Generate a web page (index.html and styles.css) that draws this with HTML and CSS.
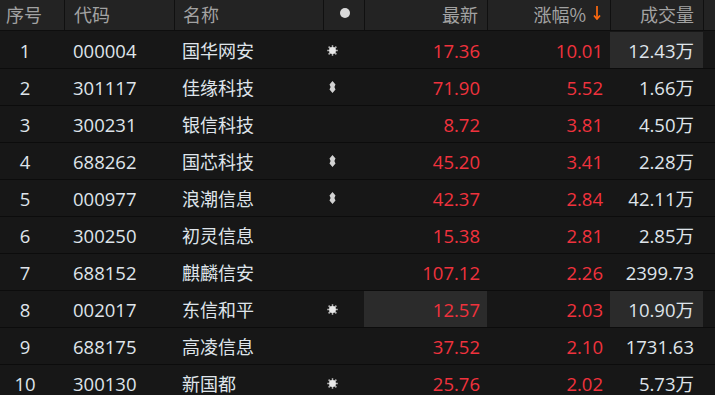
FILE: index.html
```html
<!DOCTYPE html>
<html lang="zh-CN">
<head>
<meta charset="utf-8">
<title>行情列表</title>
<link rel="stylesheet" href="styles.css">
</head>
<body>
<div class="table">
  <div class="row head">
    <div class="c idx-h">序号</div>
    <div class="c code sep">代码</div>
    <div class="c name sep">名称</div>
    <div class="c mark-h sep"><span class="dot"></span></div>
    <div class="c num sep">最新</div>
    <div class="c num sep">涨幅%<svg class="arrow" width="8" height="14" viewBox="0 0 8 14"><line x1="4" y1="0" x2="4" y2="13" /><polyline points="1,9.5 4,13 7,9.5" /></svg></div>
    <div class="c num vol sep">成交量</div>
    <div class="c sep"></div>
  </div>
  <div class="body">
    <div class="row">
      <div class="c idx">1</div><div class="c code">000004</div><div class="c name">国华网安</div>
      <div class="c mark"><svg class="star" width="11" height="11" viewBox="0 0 11 11"><g><line x1="5.5" y1="0.2" x2="5.5" y2="10.8"/><line x1="0.2" y1="5.5" x2="10.8" y2="5.5"/><line x1="1.6" y1="1.6" x2="9.4" y2="9.4"/><line x1="9.4" y1="1.6" x2="1.6" y2="9.4"/></g><circle cx="5.5" cy="5.5" r="3.4"/></svg></div>
      <div class="c num red">17.36</div><div class="c num red">10.01</div><div class="c num vol hl">12.43万</div><div class="c"></div>
    </div>
    <div class="row">
      <div class="c idx">2</div><div class="c code">301117</div><div class="c name">佳缘科技</div>
      <div class="c mark"><svg class="dia" width="7" height="12" viewBox="0 0 7 12"><path d="M3.5 0 L6.5 3.6 L5.4 6 L6.5 8.4 L3.5 12 L0.5 8.4 L1.6 6 L0.5 3.6 Z"/></svg></div>
      <div class="c num red">71.90</div><div class="c num red">5.52</div><div class="c num vol">1.66万</div><div class="c"></div>
    </div>
    <div class="row">
      <div class="c idx">3</div><div class="c code">300231</div><div class="c name">银信科技</div>
      <div class="c mark"></div>
      <div class="c num red">8.72</div><div class="c num red">3.81</div><div class="c num vol">4.50万</div><div class="c"></div>
    </div>
    <div class="row">
      <div class="c idx">4</div><div class="c code">688262</div><div class="c name">国芯科技</div>
      <div class="c mark"><svg class="dia" width="7" height="12" viewBox="0 0 7 12"><path d="M3.5 0 L6.5 3.6 L5.4 6 L6.5 8.4 L3.5 12 L0.5 8.4 L1.6 6 L0.5 3.6 Z"/></svg></div>
      <div class="c num red">45.20</div><div class="c num red">3.41</div><div class="c num vol">2.28万</div><div class="c"></div>
    </div>
    <div class="row">
      <div class="c idx">5</div><div class="c code">000977</div><div class="c name">浪潮信息</div>
      <div class="c mark"><svg class="dia" width="7" height="12" viewBox="0 0 7 12"><path d="M3.5 0 L6.5 3.6 L5.4 6 L6.5 8.4 L3.5 12 L0.5 8.4 L1.6 6 L0.5 3.6 Z"/></svg></div>
      <div class="c num red">42.37</div><div class="c num red">2.84</div><div class="c num vol">42.11万</div><div class="c"></div>
    </div>
    <div class="row">
      <div class="c idx">6</div><div class="c code">300250</div><div class="c name">初灵信息</div>
      <div class="c mark"></div>
      <div class="c num red">15.38</div><div class="c num red">2.81</div><div class="c num vol">2.85万</div><div class="c"></div>
    </div>
    <div class="row">
      <div class="c idx">7</div><div class="c code">688152</div><div class="c name">麒麟信安</div>
      <div class="c mark"></div>
      <div class="c num red">107.12</div><div class="c num red">2.26</div><div class="c num vol">2399.73</div><div class="c"></div>
    </div>
    <div class="row">
      <div class="c idx">8</div><div class="c code">002017</div><div class="c name">东信和平</div>
      <div class="c mark"><svg class="star" width="11" height="11" viewBox="0 0 11 11"><g><line x1="5.5" y1="0.2" x2="5.5" y2="10.8"/><line x1="0.2" y1="5.5" x2="10.8" y2="5.5"/><line x1="1.6" y1="1.6" x2="9.4" y2="9.4"/><line x1="9.4" y1="1.6" x2="1.6" y2="9.4"/></g><circle cx="5.5" cy="5.5" r="3.4"/></svg></div>
      <div class="c num red hl">12.57</div><div class="c num red">2.03</div><div class="c num vol hl">10.90万</div><div class="c"></div>
    </div>
    <div class="row">
      <div class="c idx">9</div><div class="c code">688175</div><div class="c name">高凌信息</div>
      <div class="c mark"></div>
      <div class="c num red">37.52</div><div class="c num red">2.10</div><div class="c num vol">1731.63</div><div class="c"></div>
    </div>
    <div class="row">
      <div class="c idx">10</div><div class="c code">300130</div><div class="c name">新国都</div>
      <div class="c mark"><svg class="star" width="11" height="11" viewBox="0 0 11 11"><g><line x1="5.5" y1="0.2" x2="5.5" y2="10.8"/><line x1="0.2" y1="5.5" x2="10.8" y2="5.5"/><line x1="1.6" y1="1.6" x2="9.4" y2="9.4"/><line x1="9.4" y1="1.6" x2="1.6" y2="9.4"/></g><circle cx="5.5" cy="5.5" r="3.4"/></svg></div>
      <div class="c num red">25.76</div><div class="c num red">2.02</div><div class="c num vol">5.73万</div><div class="c"></div>
    </div>
  </div>
</div>
</body>
</html>
```

FILE: styles.css
```css
html, body {
  margin: 0;
  padding: 0;
  background: #171717;
  overflow: hidden;
}
.table {
  width: 715px;
  height: 395px;
  background: #171717;
  font-family: "Open Sans", "Noto Sans CJK SC", sans-serif;
  color: #dfe4ea;
}
.row {
  display: grid;
  grid-template-columns: 64px 110px 149px 41px 123px 123px 93px 1fr;
  height: 37px;
  box-sizing: border-box;
  border-bottom: 1px solid #0c0c0c;
}
.head {
  height: 31px;
  background: #232323;
  border-bottom: 1px solid #0e0e0e;
  color: #a2a2a2;
  font-size: 18px;
}
.head .c {
  padding-bottom: 3px;
  font-family: "Noto Sans CJK SC", sans-serif;
}
.head .sep {
  border-left: 1px solid #101010;
}
.body {
  padding-top: 1px;
}
.c {
  display: flex;
  align-items: center;
  box-sizing: border-box;
  white-space: nowrap;
  font-size: 18.5px;
}
.head .c { font-size: 18px; }
.idx-h { padding-left: 6px; }
.idx {
  justify-content: center;
  padding-right: 14px;
}
.code { padding-left: 9px; }
.name {
  padding-left: 8px;
  font-size: 18px;
  font-family: "Noto Sans CJK SC", sans-serif;
}
.mark { padding-left: 4px; }
.mark-h { justify-content: center; }
.num {
  justify-content: flex-end;
  padding-right: 7px;
}
.head .num { padding-right: 9px; }
.vol { padding-right: 9px; }
.red { color: #f0323d; }
.hl { background: #2b2b2b; }
.dot {
  width: 10px;
  height: 10px;
  border-radius: 50%;
  background: #d9d9d9;
  margin-left: 1px;
  margin-top: -2px;
}
.arrow {
  margin-left: 7px;
  margin-top: -2px;
  fill: none;
  stroke: #ff6a10;
  stroke-width: 1.7;
}
.star g {
  stroke: #b4b4b4;
  stroke-width: 1.5;
}
.star circle {
  fill: #e8e8e8;
}
.dia {
  fill: #d2d2d2;
  margin-left: 2px;
}
```
